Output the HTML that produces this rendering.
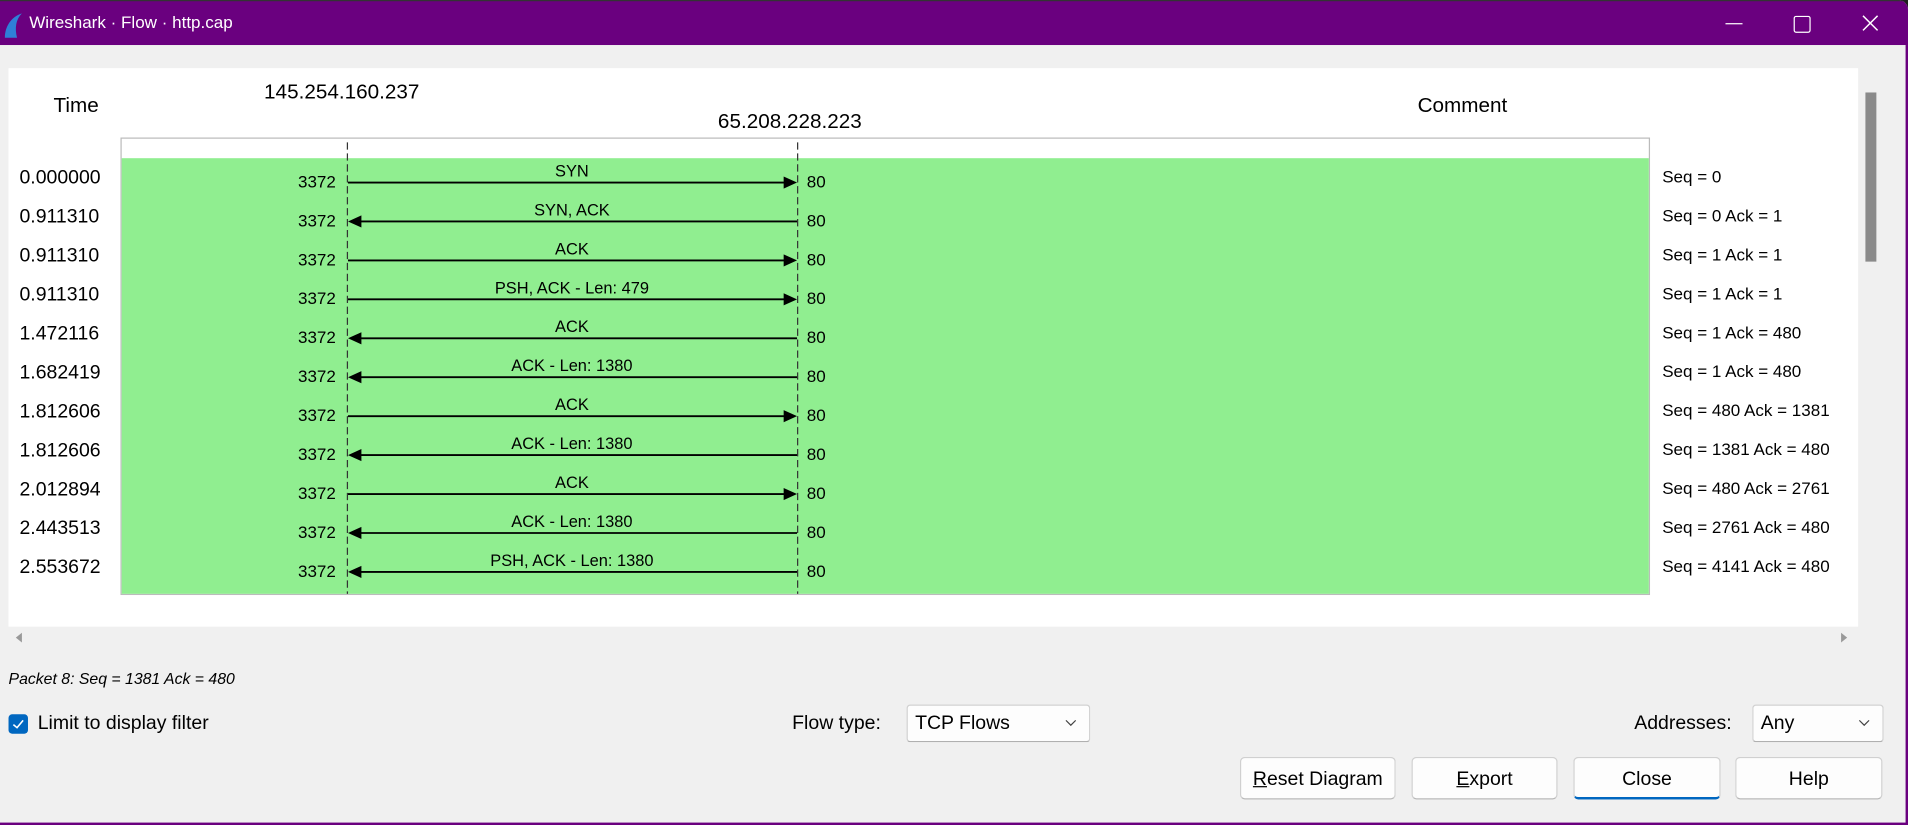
<!DOCTYPE html>
<html><head><meta charset="utf-8"><style>
html,body{margin:0;padding:0;width:1908px;height:825px;overflow:hidden;background:#1f1f1f}
#w{position:absolute;left:0;top:0;width:1568px;height:678px;transform:scale(1.21684);transform-origin:0 0;background:#f0f0f0;font-family:"Liberation Sans",sans-serif;color:#000;border-radius:0 8px 0 0;overflow:hidden}
.a{position:absolute;white-space:nowrap}
.btn{position:absolute;top:622px;height:35px;background:#fdfdfd;border:1px solid #d0d0d0;border-bottom-color:#b8b8b8;border-radius:4px;font-size:16px;text-align:center;line-height:35px;box-sizing:border-box}
.cb{position:absolute;top:579px;height:31px;background:#fdfdfd;border:1px solid #d0d0d0;border-bottom-color:#b0b0b0;border-radius:3px;box-sizing:border-box;font-size:16px;line-height:29px;padding-left:6px}
</style></head><body>
<div id="w">
<div class="a" style="left:0;top:0;width:1568px;height:37px;background:#6a007f;border-top:1px solid #333;box-sizing:border-box"></div>
<svg class="a" style="left:2px;top:10px" width="18" height="22" viewBox="0 0 18 22"><path d="M2 21 C2 12 7 4 16 1 C11 6 10 13 12 21 Z" fill="#2f7fd8"/></svg>
<div class="a" style="left:24px;top:10px;color:#fff;font-size:14px">Wireshark · Flow · http.cap</div>
<div class="a" style="left:1418px;top:19px;width:14px;height:1px;background:#fff"></div>
<div class="a" style="left:1474px;top:13px;width:12px;height:12px;border:1px solid #fff;border-radius:2px"></div>
<svg class="a" style="left:1530px;top:12px" width="14" height="14"><path d="M1 1L13 13M13 1L1 13" stroke="#fff" stroke-width="1.2"/></svg>
<div class="a" style="left:7px;top:56px;width:1520px;height:459px;background:#fff"></div>
<div class="a" style="left:1533px;top:76px;width:9px;height:139px;background:#8a8a8a"></div>
<div class="a" style="left:44px;top:77px;font-size:17px">Time</div>
<div class="a" style="left:217px;top:66px;font-size:17px">145.254.160.237</div>
<div class="a" style="left:590px;top:90px;font-size:17px">65.208.228.223</div>
<div class="a" style="left:1165px;top:77px;font-size:17px">Comment</div>
<svg class="a" style="left:0;top:0" width="1568" height="540" font-family="Liberation Sans, sans-serif">
<rect x="99.5" y="113.5" width="1256" height="375" fill="#fff" stroke="#bbb"/>
<rect x="100" y="130" width="1255" height="358" fill="#90ee90"/>
<line x1="285.5" y1="117" x2="285.5" y2="488" stroke="#333" stroke-dasharray="6,3"/>
<line x1="655.5" y1="117" x2="655.5" y2="488" stroke="#333" stroke-dasharray="6,3"/>
<g id="rows" font-size="14"></g>
<path d="M18 520 L13 524 L18 528Z" fill="#999"/>
<path d="M1513 520 L1518 524 L1513 528Z" fill="#999"/>
</svg>
<div class="a" style="left:7px;top:550px;font-size:13px;font-style:italic">Packet 8: Seq = 1381 Ack = 480</div>
<div class="a" style="left:7px;top:587px;width:16px;height:16px;background:#0067c0;border-radius:3px"></div>
<svg class="a" style="left:7px;top:587px" width="16" height="16"><path d="M4 8.5L7 11L12 5" stroke="#fff" stroke-width="1.3" fill="none"/></svg>
<div class="a" style="left:31px;top:586px;font-size:16px">Limit to display filter</div>
<div class="a" style="left:651px;top:586px;font-size:16px">Flow type:</div>
<div class="cb" style="left:745px;width:151px">TCP Flows</div>
<svg class="a" style="left:875px;top:590px" width="10" height="8"><path d="M1 2L5 6L9 2" stroke="#444" fill="none"/></svg>
<div class="a" style="left:1343px;top:586px;font-size:16px">Addresses:</div>
<div class="cb" style="left:1440px;width:108px">Any</div>
<svg class="a" style="left:1527px;top:590px" width="10" height="8"><path d="M1 2L5 6L9 2" stroke="#444" fill="none"/></svg>
<div class="btn" style="left:1019px;width:128px"><u>R</u>eset Diagram</div>
<div class="btn" style="left:1160px;width:120px"><u>E</u>xport</div>
<div class="btn" style="left:1293px;width:121px;border-bottom:2px solid #0067c0">Close</div>
<div class="btn" style="left:1426px;width:121px">Help</div>
<div class="a" style="left:0;top:676px;width:1568px;height:2px;background:#6a007f"></div>
<div class="a" style="left:1566px;top:37px;width:2px;height:641px;background:#6a007f"></div>
</div>
<script>
var d=[["0.000000","SYN",1,"Seq = 0"],["0.911310","SYN, ACK",0,"Seq = 0 Ack = 1"],["0.911310","ACK",1,"Seq = 1 Ack = 1"],["0.911310","PSH, ACK - Len: 479",1,"Seq = 1 Ack = 1"],["1.472116","ACK",0,"Seq = 1 Ack = 480"],["1.682419","ACK - Len: 1380",0,"Seq = 1 Ack = 480"],["1.812606","ACK",1,"Seq = 480 Ack = 1381"],["1.812606","ACK - Len: 1380",0,"Seq = 1381 Ack = 480"],["2.012894","ACK",1,"Seq = 480 Ack = 2761"],["2.443513","ACK - Len: 1380",0,"Seq = 2761 Ack = 480"],["2.553672","PSH, ACK - Len: 1380",0,"Seq = 4141 Ack = 480"]];
var s="";
d.forEach(function(r,i){var y=150+i*32;
s+='<text x="16" y="'+(y+1)+'" font-size="16">'+r[0]+'</text>';
s+='<text x="276" y="'+(y+4)+'" text-anchor="end">3372</text>';
s+='<text x="663" y="'+(y+4)+'">80</text>';
s+='<text x="470" y="'+(y-5)+'" text-anchor="middle" font-size="13.5">'+r[1]+'</text>';
s+='<text x="1366" y="'+(y)+'">'+r[3]+'</text>';
if(r[2]){s+='<line x1="286" y1="'+y+'" x2="645" y2="'+y+'" stroke="#000" stroke-width="1.5"/><path d="M644 '+(y-5)+'L655 '+y+'L644 '+(y+5)+'Z"/>';}
else{s+='<line x1="296" y1="'+y+'" x2="655" y2="'+y+'" stroke="#000" stroke-width="1.5"/><path d="M297 '+(y-5)+'L286 '+y+'L297 '+(y+5)+'Z"/>';}
});
document.getElementById("rows").innerHTML=s;
</script>
</body></html>
